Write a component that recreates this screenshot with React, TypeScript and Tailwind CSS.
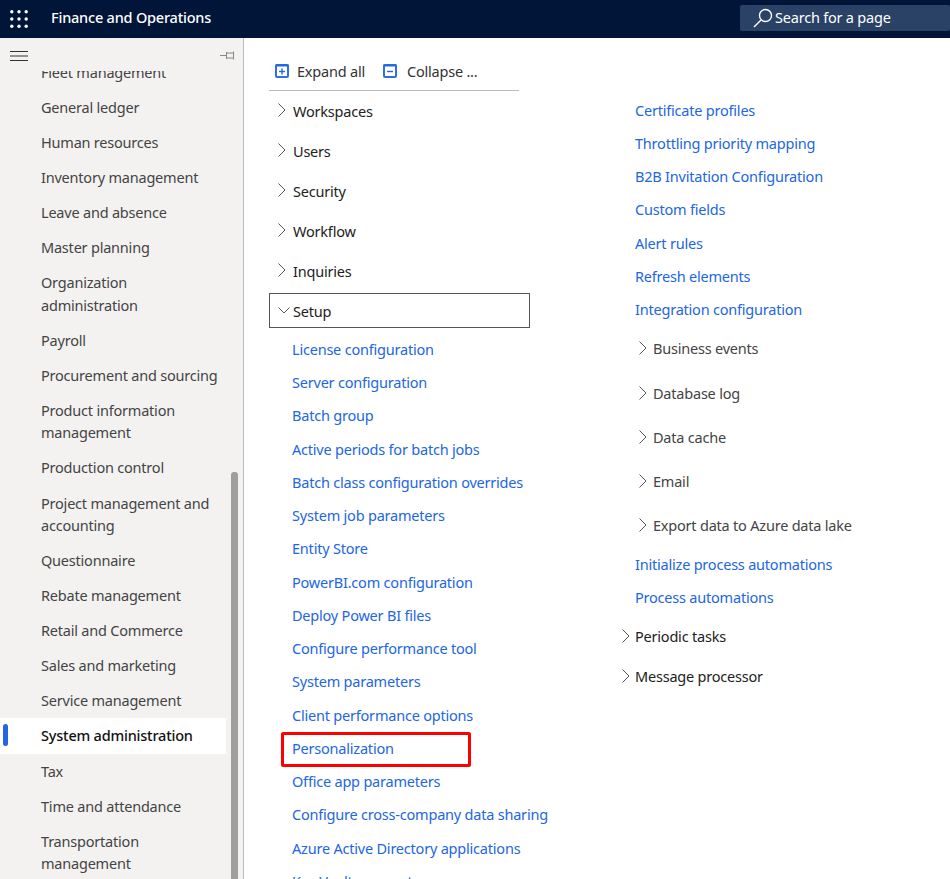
import React from 'react'

const navItems = [
  'Fleet management', 'General ledger', 'Human resources', 'Inventory management', 'Leave and absence', 'Master planning',
  'Organization administration', 'Payroll', 'Procurement and sourcing', 'Product information management',
  'Production control', 'Project management and accounting', 'Questionnaire', 'Rebate management',
  'Retail and Commerce', 'Sales and marketing', 'Service management', 'System administration', 'Tax',
  'Time and attendance', 'Transportation management',
]

const setupLinks = [
  'License configuration', 'Server configuration', 'Batch group', 'Active periods for batch jobs',
  'Batch class configuration overrides', 'System job parameters', 'Entity Store', 'PowerBI.com configuration',
  'Deploy Power BI files', 'Configure performance tool', 'System parameters', 'Client performance options',
  'Personalization', 'Office app parameters', 'Configure cross-company data sharing',
  'Azure Active Directory applications', 'Key Vault parameters',
]

const rightLinks = [
  'Certificate profiles', 'Throttling priority mapping', 'B2B Invitation Configuration', 'Custom fields',
  'Alert rules', 'Refresh elements', 'Integration configuration',
]

const subGroups = ['Business events', 'Database log', 'Data cache', 'Email', 'Export data to Azure data lake']

function Chevron({ down = false }: { down?: boolean }) {
  return (
    <svg width="12" height="16" viewBox="0 0 12 16" className="shrink-0" fill="none" stroke="#555" strokeWidth="1">
      {down ? <path d="M0.5 4.5 L6 10 L11.5 4.5" /> : <path d="M2.5 1.5 L9 8 L2.5 14.5" />}
    </svg>
  )
}

function Waffle() {
  const xs = [1.8, 9, 16.2]
  return (
    <svg width="18" height="18" viewBox="0 0 18 18" fill="#fff">
      {xs.map(y => xs.map(x => <circle key={`${x}-${y}`} cx={x} cy={y} r="1.7" />))}
    </svg>
  )
}

function BoxIcon({ plus }: { plus?: boolean }) {
  return (
    <svg width="14" height="14" viewBox="0 0 14 14" fill="none" className="shrink-0">
      <rect x="1" y="1" width="12" height="12" rx="1" stroke="#2f6fe4" strokeWidth="2" />
      <path d="M0.5 1.5 H13.5" stroke="#2266e3" strokeWidth="2" />
      <path d="M4 7.5 H10" stroke="#2266e3" strokeWidth="1.4" />
      {plus && <path d="M7 4.5 V10.5" stroke="#2266e3" strokeWidth="1.4" />}
    </svg>
  )
}

function LinkRow({ label, boxed }: { label: string; boxed?: boolean }) {
  return (
    <div className="relative h-[33.25px] leading-[33.25px] text-[#2266e3] whitespace-nowrap">
      {label}
      {boxed && <div className="absolute left-[-11px] top-0 w-[190px] h-[35px] border-[3px] border-[#fe0000] rounded-[2px]" />}
    </div>
  )
}

function SectionRow({ label }: { label: string }) {
  return (
    <div className="flex items-center h-10 text-[#222]">
      <div className="w-6 pl-[7px] -mt-[2px] flex"><Chevron /></div>
      <span className="mt-[1px]">{label}</span>
    </div>
  )
}

export default function App() {
  return (
    <div
      className="w-[950px] h-[879px] overflow-hidden flex flex-col bg-white text-[14.5px] text-[#333]"
      style={{ fontFamily: '"Noto Sans", "Open Sans", Arial, sans-serif', letterSpacing: '-0.21px' }}
    >
      {/* Top bar */}
      <div className="h-[38px] shrink-0 bg-[#001537] flex items-center text-white">
        <div className="w-[51px] pl-[10px] flex -mt-[1px]"><Waffle /></div>
        <span className="font-medium text-[14.5px] -mt-[2px]">Finance and Operations</span>
        <div className="ml-auto mt-[-2px] w-[210px] h-[26px] bg-[#2a4265] rounded-[2px] flex items-center pl-[13px] gap-[2px] text-[14.5px]">
          <svg width="20" height="20" viewBox="0 0 20 20" fill="none" stroke="#fff" strokeWidth="1.4">
            <circle cx="12.5" cy="7.5" r="6" />
            <path d="M8 12 L1 19" />
          </svg>
          Search for a page
        </div>
      </div>

      <div className="flex-1 flex min-h-0">
        {/* Sidebar */}
        <div className="relative w-[244px] shrink-0 bg-[#f3f2f1] border-r border-[#bbb] flex flex-col">
          <div className="h-[33px] shrink-0 flex items-start justify-between pt-[12px] pl-[10px] pr-[8px]">
            <svg width="18" height="12" viewBox="0 0 18 12" stroke="#333" strokeWidth="1">
              <path d="M0 1.5 H18 M0 6 H18 M0 10.5 H18" />
            </svg>
            <svg width="15" height="9" viewBox="0 0 15 9" fill="none" stroke="#8a8886" strokeWidth="1" className="mt-[1px]">
              <path d="M0 4.5 H6 M6.5 1 V8 M6.5 2 H13 M6.5 7 H13 M13.5 0.5 V8.5" />
            </svg>
          </div>
          <div className="flex-1 overflow-hidden w-[226px]">
            <div className="-mt-[16.7px]">
              {navItems.map(item => {
                const active = item === 'System administration'
                return (
                  <div
                    key={item}
                    className={
                      active
                        ? 'relative bg-white pl-[41px] pr-[4px] pt-[6px] pb-[7px] leading-[22.4px] font-medium text-[#111]'
                        : 'pl-[41px] pr-[4px] py-[6.35px] leading-[22.4px] text-[#444]'
                    }
                  >
                    {active && <div className="absolute left-[3px] top-[6px] w-[5px] h-[22px] rounded-full bg-[#2266e3]" />}
                    {item}
                  </div>
                )
              })}
            </div>
          </div>
          {/* Scrollbar */}
          <div className="absolute left-[231px] top-[434px] bottom-0 w-[7px] bg-[#a19f9d] rounded-t-[3px]" />
        </div>

        {/* Main content */}
        <div className="flex-1 flex min-w-0 overflow-hidden pl-[25px]">
          <div className="w-[261px] shrink-0">
            <div className="w-[250px] h-[53px] pt-[18px] border-b border-[#bbb] flex items-start">
              <div className="flex items-center h-[30px] pl-[6px] gap-[8px]">
                <BoxIcon plus />
                <span className="mt-[1px]">Expand all</span>
              </div>
              <div className="flex items-center h-[30px] ml-[18px] gap-[10px]">
                <BoxIcon />
                <span className="mt-[1px]">Collapse ...</span>
              </div>
            </div>
            {['Workspaces', 'Users', 'Security', 'Workflow', 'Inquiries'].map(s => <SectionRow key={s} label={s} />)}
            <div className="flex items-center h-[35px] mt-[2px] border border-[#555] text-[#222]">
              <div className="w-[23px] pl-[8px] flex"><Chevron down /></div>
              <span className="mt-[2px]">Setup</span>
            </div>
            <div className="pl-[23px] pt-[4.9px]">
              {setupLinks.map(l => <LinkRow key={l} label={l} boxed={l === 'Personalization'} />)}
            </div>
          </div>

          <div className="ml-[90px] pt-[55.7px] flex-1">
            <div className="pl-[15px]">
              {rightLinks.map(l => <LinkRow key={l} label={l} />)}
            </div>
            <div className="pl-[17px] pt-[0.7px]">
              {subGroups.map(g => (
                <div key={g} className="flex items-center h-[44.25px] text-[#444]">
                  <div className="w-[16px] flex -mt-[2px]"><Chevron /></div>
                  {g}
                </div>
              ))}
            </div>
            <div className="pl-[15px] -mt-[0.5px]">
              <LinkRow label="Initialize process automations" />
              <LinkRow label="Process automations" />
            </div>
            <div className="pt-[2.5px]">
              {['Periodic tasks', 'Message processor'].map(s => (
                <div key={s} className="flex items-center h-10 text-[#222]">
                  <div className="w-[15px] flex -mt-[2px]"><Chevron /></div>
                  {s}
                </div>
              ))}
            </div>
          </div>
        </div>
      </div>
    </div>
  )
}
